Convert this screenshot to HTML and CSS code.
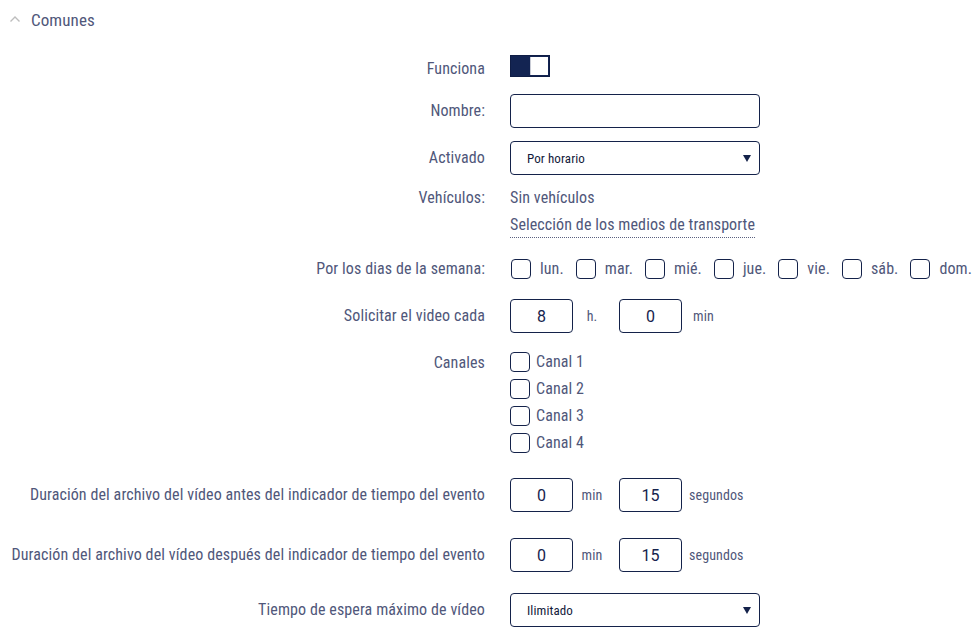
FILE: index.html
```html
<!DOCTYPE html>
<html lang="es">
<head>
<meta charset="utf-8">
<title>Comunes</title>
<link rel="stylesheet" href="styles.css">
</head>
<body>
<div class="section">
  <div class="section-head">
    <svg class="chev" width="12" height="8" viewBox="0 0 12 8"><polyline points="1.5,6.5 6,2 10.5,6.5" fill="none" stroke="#bdbdbd" stroke-width="1.4"/></svg>
    <span class="section-title">Comunes</span>
  </div>

  <div class="form">
    <div class="row row-func">
      <div class="label">Funciona</div>
      <div class="control"><span class="toggle"><span class="knob"></span></span></div>
    </div>

    <div class="row row-nombre">
      <div class="label">Nombre:</div>
      <div class="control"><input class="text-input" type="text" value=""></div>
    </div>

    <div class="row row-activ">
      <div class="label">Activado</div>
      <div class="control">
        <div class="select"><span>Por horario</span><svg width="8" height="7" viewBox="0 0 8 7"><polygon points="0,0 8,0 4,7" fill="#14224a"/></svg></div>
      </div>
    </div>

    <div class="row row-veh top">
      <div class="label">Vehículos:</div>
      <div class="control">
        <div class="veh-line">Sin vehículos</div>
        <span class="link">Selección de los medios de transporte</span>
      </div>
    </div>

    <div class="row row-days">
      <div class="label">Por los dias de la semana:</div>
      <div class="control days">
        <label class="chk"><span class="box"></span>lun.</label>
        <label class="chk"><span class="box"></span>mar.</label>
        <label class="chk"><span class="box"></span>mié.</label>
        <label class="chk"><span class="box"></span>jue.</label>
        <label class="chk"><span class="box"></span>vie.</label>
        <label class="chk"><span class="box"></span>sáb.</label>
        <label class="chk"><span class="box"></span>dom.</label>
      </div>
    </div>

    <div class="row row-solic">
      <div class="label">Solicitar el video cada</div>
      <div class="control pair">
        <input class="num" type="text" value="8"><span class="unit">h.</span><input class="num" type="text" value="0"><span class="unit unit-end">min</span>
      </div>
    </div>

    <div class="row row-can top">
      <div class="label label-can">Canales</div>
      <div class="control channels">
        <label class="chk ch"><span class="box"></span>Canal 1</label>
        <label class="chk ch"><span class="box"></span>Canal 2</label>
        <label class="chk ch"><span class="box"></span>Canal 3</label>
        <label class="chk ch"><span class="box"></span>Canal 4</label>
      </div>
    </div>

    <div class="row row-dur1">
      <div class="label">Duración del archivo del vídeo antes del indicador de tiempo del evento</div>
      <div class="control pair">
        <input class="num" type="text" value="0"><span class="unit">min</span><input class="num" type="text" value="15"><span class="unit unit-wide">segundos</span>
      </div>
    </div>

    <div class="row row-dur2">
      <div class="label">Duración del archivo del vídeo después del indicador de tiempo del evento</div>
      <div class="control pair">
        <input class="num" type="text" value="0"><span class="unit">min</span><input class="num" type="text" value="15"><span class="unit unit-wide">segundos</span>
      </div>
    </div>

    <div class="row row-tiempo">
      <div class="label">Tiempo de espera máximo de vídeo</div>
      <div class="control">
        <div class="select"><span>Ilimitado</span><svg width="8" height="7" viewBox="0 0 8 7"><polygon points="0,0 8,0 4,7" fill="#14224a"/></svg></div>
      </div>
    </div>
  </div>
</div>
</body>
</html>
```

FILE: styles.css
```css
html, body {
  margin: 0;
  padding: 0;
  background: #ffffff;
}
body {
  font-family: Roboto, "Noto Sans", sans-serif;
  font-stretch: 87.5%;
  letter-spacing: 0.1px;
  color: #50577a;
  font-size: 16px;
}
.section-head {
  height: 40px;
  display: flex;
  align-items: center;
  padding-left: 9px;
}
.chev {
  display: block;
  margin-right: 10px;
  margin-top: -2px;
}
.section-title {
  font-size: 17px;
  color: #50577a;
}
.form {
  display: flex;
  flex-direction: column;
}
.row {
  display: flex;
  align-items: center;
}
.row.top {
  align-items: flex-start;
}
.label {
  width: 485px;
  flex: none;
  margin-right: 25px;
  text-align: right;
  white-space: nowrap;
  line-height: 26px;
}
.control {
  display: flex;
  align-items: center;
}
.row-func { margin-top: 15px; height: 26px; align-items: flex-start; }
.row-func .label { line-height: 27px; }
.row-nombre { margin-top: 13px; }
.row-activ { margin-top: 13px; }
.row-veh { margin-top: 10px; }
.row-days { margin-top: 18px; }
.row-solic { margin-top: 17px; }
.row-can { margin-top: 15px; }
.row-dur1 { margin-top: 22px; }
.row-dur2 { margin-top: 26px; }
.row-tiempo { margin-top: 21px; }

.toggle {
  display: block;
  width: 40px;
  height: 22px;
  box-sizing: border-box;
  background: #132452;
  border: 1px solid #0f1d45;
  position: relative;
}
.knob {
  position: absolute;
  right: 1px;
  top: 1px;
  width: 17px;
  height: 18px;
  background: #ffffff;
  border-left: 1px solid #c9ccd6;
}
.text-input {
  width: 250px;
  height: 34px;
  box-sizing: border-box;
  border: 1px solid #14224a;
  border-radius: 4px;
  outline: none;
  padding: 0 10px;
  font-family: inherit;
  font-size: 14px;
  background: #fff;
}
.select {
  width: 250px;
  height: 34px;
  box-sizing: border-box;
  border: 1px solid #14224a;
  border-radius: 4px;
  display: flex;
  align-items: center;
  justify-content: space-between;
  padding: 0 8px 0 16px;
  font-size: 13px;
  color: #121a3b;
}
.row-veh .control {
  flex-direction: column;
  align-items: flex-start;
}
.veh-line {
  line-height: 26px;
}
.link {
  display: inline-block;
  line-height: 24px;
  margin-top: 2px;
  border-bottom: 1px dotted #5b6180;
}
.days {
  gap: 11px;
}
.chk {
  display: flex;
  align-items: center;
  line-height: 20px;
}
.box {
  display: block;
  width: 20px;
  height: 20px;
  box-sizing: border-box;
  border: 1.5px solid #14224a;
  border-radius: 4px;
  margin-right: 9px;
  flex: none;
}
.days .chk .box { margin-left: 1px; }
.channels {
  flex-direction: column;
  align-items: flex-start;
}
.chk.ch {
  height: 27px;
  line-height: 27px;
}
.chk.ch .box {
  margin-right: 6px;
}
.label-can {
  line-height: 27px;
  margin-top: 1px;
}
.num {
  width: 63px;
  height: 34px;
  box-sizing: border-box;
  border: 1px solid #14224a;
  border-radius: 4px;
  outline: none;
  text-align: center;
  font-family: inherit;
  font-size: 16px;
  color: #16234d;
  padding: 0;
  background: #fff;
}
.unit {
  font-size: 14px;
  min-width: 38px;
  text-align: center;
  margin-right: 8px;
  color: #50577a;
}
.unit-end {
  margin-right: 0;
  text-align: left;
  padding-left: 11px;
}
.unit-wide {
  margin-right: 0;
  text-align: left;
  padding-left: 7px;
}
```
